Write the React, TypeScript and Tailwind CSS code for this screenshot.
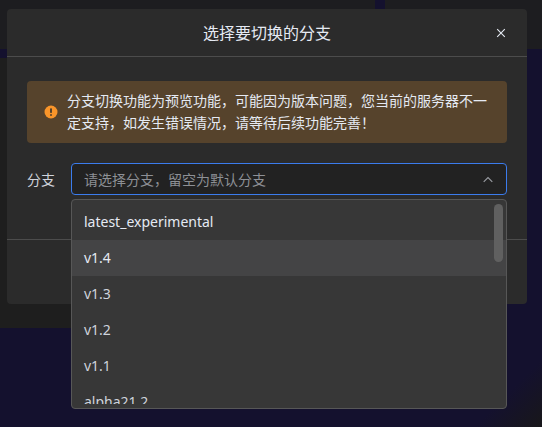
const branches = ["latest_experimental", "v1.4", "v1.3", "v1.2", "v1.1", "alpha21.2"];

const font = { fontFamily: '"Noto Sans", "Noto Sans CJK SC", sans-serif' };

const WarningIcon = () => (
  <svg width="14" height="14" viewBox="0 0 14 14" className="shrink-0">
    <circle cx="7" cy="7" r="6.5" fill="#f9952a" />
    <rect x="6" y="3.2" width="2" height="4.8" rx="0.8" fill="#56432c" />
    <rect x="6" y="9" width="2" height="2" rx="1" fill="#56432c" />
  </svg>
);

const CloseIcon = () => (
  <svg width="10" height="10" viewBox="0 0 10 10" fill="none" stroke="#e5eaf3" strokeWidth="1.1">
    <path d="M1.2 1.2l7.6 7.6M8.8 1.2l-7.6 7.6" />
  </svg>
);

const ChevronUp = () => (
  <svg width="10" height="7" viewBox="0 0 10 7" fill="none" stroke="#9a9da3" strokeWidth="1.1">
    <path d="M0.7 5.8L5 1.5l4.3 4.3" />
  </svg>
);

export default function App() {
  return (
    <div
      className="relative w-[542px] h-[427px] overflow-hidden bg-[linear-gradient(135deg,#14112e_93%,#18171a_100%)]"
      style={font}
    >
      {/* page behind the dialog */}
      <div className="flex h-[49px] gap-[10px]">
        <div className="w-[375px] bg-[#1d1d20]" />
        <div className="flex-1 bg-[#1d1d20]" />
      </div>
      <div className="mt-[9px] w-[300px] h-[270px] bg-[#1e1e1e]" />

      <div className="absolute left-[7px] top-[9px] w-[520px] h-[295px] rounded bg-[#2b2b2b] flex flex-col">
        <div className="h-[48px] shrink-0 flex items-center justify-center relative border-b border-[#4c4c4c]">
          <span className="text-[16px] leading-6 text-[#e5eaf3]">选择要切换的分支</span>
          <button className="absolute right-[21px] top-[19px] flex">
            <CloseIcon />
          </button>
        </div>
        <div className="px-5 pt-[24px]">
          <div className="h-[62px] rounded-sm bg-[#56432c] flex items-center pl-[17px] pr-[20px] gap-[9px]">
            <WarningIcon />
            <p className="text-[14px] leading-[22px] text-[#e5eaf3]">
              分支切换功能为预览功能，可能因为版本问题，您当前的服务器不一定支持，如发生错误情况，请等待后续功能完善！
            </p>
          </div>
          <div className="mt-5 flex items-center h-8">
            <label className="w-[44px] text-[14px] text-[#cfd3dc]">分支</label>
            <div className="flex-1 h-8 rounded-sm border border-[#3b7ced] bg-[#222222] flex items-center justify-between pl-3 pr-[13px]">
              <span className="text-[14px] text-[#8d9095]">请选择分支，留空为默认分支</span>
              <ChevronUp />
            </div>
          </div>
        </div>
        <div className="mt-auto h-[65px] border-t border-[#4c4c4c]" />
      </div>

      {/* open select menu */}
      <div className="absolute left-[71px] top-[199px] w-[436px] h-[210px] rounded border border-[#575757] bg-[#373737] py-1">
        <ul className="h-full overflow-hidden">
          {branches.map((name) => (
            <li
              key={name}
              className={`h-9 px-3 pb-[2px] flex items-center text-[14px] ${
                name === "v1.4" ? "bg-[#444445] text-[#e5eaf3]" : name === "latest_experimental" ? "text-[#e5eaf3]" : "text-[#cfd3dc]"
              }`}
            >
              {name}
            </li>
          ))}
        </ul>
        <div className="absolute right-[3px] top-[4px] w-[9px] h-[58px] rounded-full bg-[#606060]" />
      </div>
    </div>
  );
}
